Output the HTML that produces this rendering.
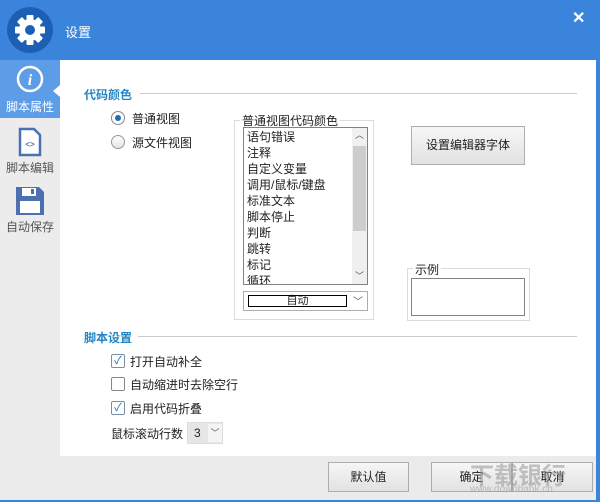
<!DOCTYPE html><html><head><meta charset="utf-8"><style>
*{margin:0;padding:0;box-sizing:border-box}
body{width:600px;height:502px;overflow:hidden;font-family:"Liberation Sans","Noto Sans CJK SC",sans-serif;font-size:12px;color:#222;background:#3b84dc;position:relative}
.abs{position:absolute}
.hdr{left:0;top:0;width:600px;height:60px;background:#3b84dc}
.side{left:0;top:60px;width:60px;height:440px;background:#ececec}
.act{left:0;top:60px;width:60px;height:58px;background:#5d9de8}
.main{left:60px;top:60px;width:536px;height:396px;background:#fff}
.bot{left:0;top:456px;width:596px;height:44px;background:#ebebeb}
.sec{color:#2286c6;font-weight:bold;font-size:12px}
.line{height:1px;background:#ccc}
.btn{border:1px solid #adadad;background:linear-gradient(#f6f6f6,#e2e2e2);text-align:center;font-size:12px}
.cb{width:14px;height:14px;border:1px solid #7a8ea8;background:#fff;border-radius:2px}
</style></head><body>
<div class="abs hdr"></div>
<svg class="abs" style="left:6px;top:6px" width="48" height="48" viewBox="0 0 48 48"><circle cx="24" cy="24" r="23" fill="#1d5fb5"/>
<g fill="#fff" transform="translate(24 24)">
<circle r="11"/>
<g><rect x="-3.5" y="-15" width="7" height="30" rx="1"/><rect x="-3.5" y="-15" width="7" height="30" rx="1" transform="rotate(45)"/><rect x="-3.5" y="-15" width="7" height="30" rx="1" transform="rotate(90)"/><rect x="-3.5" y="-15" width="7" height="30" rx="1" transform="rotate(135)"/></g>
<circle r="5" fill="#1d5fb5"/></g></svg>
<div class="abs" style="left:65px;top:22px;color:#fff;font-size:13px">设置</div>
<div class="abs" style="left:572px;top:8px;color:#fff;font-size:16px;font-weight:bold">✕</div>
<div class="abs side"></div>
<div class="abs act"></div>
<svg class="abs" style="left:16px;top:65px" width="28" height="28"><circle cx="14" cy="14" r="12" fill="none" stroke="#fff" stroke-width="2.5"/><text x="14" y="20" fill="#fff" font-size="16" font-weight="bold" font-style="italic" text-anchor="middle" font-family="Liberation Serif">i</text></svg>
<div class="abs" style="left:0;top:98px;width:60px;text-align:center;color:#fff">脚本属性</div>
<div class="abs" style="left:53px;top:85px;width:0;height:0;border-top:6px solid transparent;border-bottom:6px solid transparent;border-right:7px solid #fff"></div>
<svg class="abs" style="left:18px;top:127px" width="24" height="30"><path d="M2 2H16L22 8V28H2Z" fill="#fff" stroke="#4d70b0" stroke-width="2.5"/><text x="12" y="20" font-size="8" fill="#4d70b0" text-anchor="middle" font-weight="bold">&lt;&gt;</text></svg>
<div class="abs" style="left:0;top:159px;width:60px;text-align:center;color:#555">脚本编辑</div>
<svg class="abs" style="left:15px;top:186px" width="30" height="30"><path d="M1 1H24L29 6V29H1Z" fill="#4d70b0"/><rect x="7" y="2" width="14" height="8" fill="#fff"/><rect x="16" y="3" width="3" height="5" fill="#4d70b0"/><rect x="5" y="15" width="20" height="12" fill="#fff"/></svg>
<div class="abs" style="left:0;top:218px;width:60px;text-align:center;color:#555">自动保存</div>
<div class="abs main"></div>
<div class="abs bot"></div>
<div class="abs sec" style="left:84px;top:86px">代码颜色</div>
<div class="abs line" style="left:140px;top:93px;width:437px"></div>
<div class="abs" style="left:111px;top:111px;width:14px;height:14px;border-radius:50%;border:1px solid #888;background:#fff"><div style="margin:3px;width:6px;height:6px;border-radius:50%;background:#1a6fb5"></div></div>
<div class="abs" style="left:132px;top:110px">普通视图</div>
<div class="abs" style="left:111px;top:135px;width:14px;height:14px;border-radius:50%;border:1px solid #999;background:linear-gradient(#fff,#e4e4e4)"></div>
<div class="abs" style="left:132px;top:134px">源文件视图</div>
<div class="abs" style="left:234px;top:120px;width:140px;height:200px;border:1px solid #dcdcdc"></div>
<div class="abs" style="left:240px;top:112px;background:#fff;padding:0 2px">普通视图代码颜色</div>
<div class="abs" style="left:243px;top:127px;width:125px;height:158px;border:1px solid #828282;overflow:hidden;background:#fff">
<div style="padding:1px 0 0 3px;line-height:16px">语句错误<br>注释<br>自定义变量<br>调用/鼠标/键盘<br>标准文本<br>脚本停止<br>判断<br>跳转<br>标记<br>循环</div>
<div class="abs" style="right:0;top:0;width:15px;height:156px;background:#f0f0f0"><div style="text-align:center;font-size:9px;color:#555">︿</div><div class="abs" style="left:1px;top:18px;width:13px;height:85px;background:#cdcdcd"></div><div class="abs" style="left:0;bottom:2px;width:15px;text-align:center;font-size:9px;color:#555">﹀</div></div></div>
<div class="abs" style="left:243px;top:291px;width:125px;height:20px;border:1px solid #adadad;background:#fff"><div class="abs" style="left:4px;top:3px;width:99px;height:12px;border:1px solid #000;text-align:center;font-size:11px;line-height:10px">自动</div><div class="abs" style="right:4px;top:1px;font-size:10px;color:#555">﹀</div></div>
<div class="abs btn" style="left:411px;top:126px;width:114px;height:39px;line-height:37px">设置编辑器字体</div>
<div class="abs" style="left:407px;top:268px;width:123px;height:53px;border:1px solid #dcdcdc"></div>
<div class="abs" style="left:413px;top:261px;background:#fff;padding:0 2px">示例</div>
<div class="abs" style="left:411px;top:278px;width:114px;height:38px;border:1px solid #828282"></div>
<div class="abs sec" style="left:84px;top:329px">脚本设置</div>
<div class="abs line" style="left:138px;top:336px;width:439px"></div>
<div class="abs cb" style="left:111px;top:354px;color:#1a6fb5;font-size:11px;line-height:12px;text-align:center">✓</div>
<div class="abs" style="left:130px;top:353px">打开自动补全</div>
<div class="abs cb" style="left:111px;top:377px;border-color:#888"></div>
<div class="abs" style="left:130px;top:376px">自动缩进时去除空行</div>
<div class="abs cb" style="left:111px;top:401px;color:#1a6fb5;font-size:11px;line-height:12px;text-align:center">✓</div>
<div class="abs" style="left:130px;top:400px">启用代码折叠</div>
<div class="abs" style="left:111px;top:425px">鼠标滚动行数</div>
<div class="abs" style="left:187px;top:422px;width:36px;height:22px;background:#e6e6e6;border:1px solid #ddd"><span class="abs" style="left:6px;top:3px">3</span><div class="abs" style="left:20px;top:1px;width:14px;height:18px;background:#f4f4f4;font-size:9px;text-align:center;line-height:18px;color:#555">﹀</div></div>
<div class="abs btn" style="left:328px;top:462px;width:81px;height:30px;line-height:28px">默认值</div>
<div class="abs btn" style="left:431px;top:462px;width:81px;height:30px;line-height:28px">确定</div>
<div class="abs btn" style="left:512px;top:462px;width:81px;height:30px;line-height:28px">取消</div>
<div class="abs" style="left:470px;top:456px;color:rgba(150,150,150,.55);font-size:24px;font-weight:bold">下载银行</div>
<div class="abs" style="left:470px;top:484px;color:rgba(150,150,150,.55);font-size:10px">www.downbank.cn</div>
</body></html>
